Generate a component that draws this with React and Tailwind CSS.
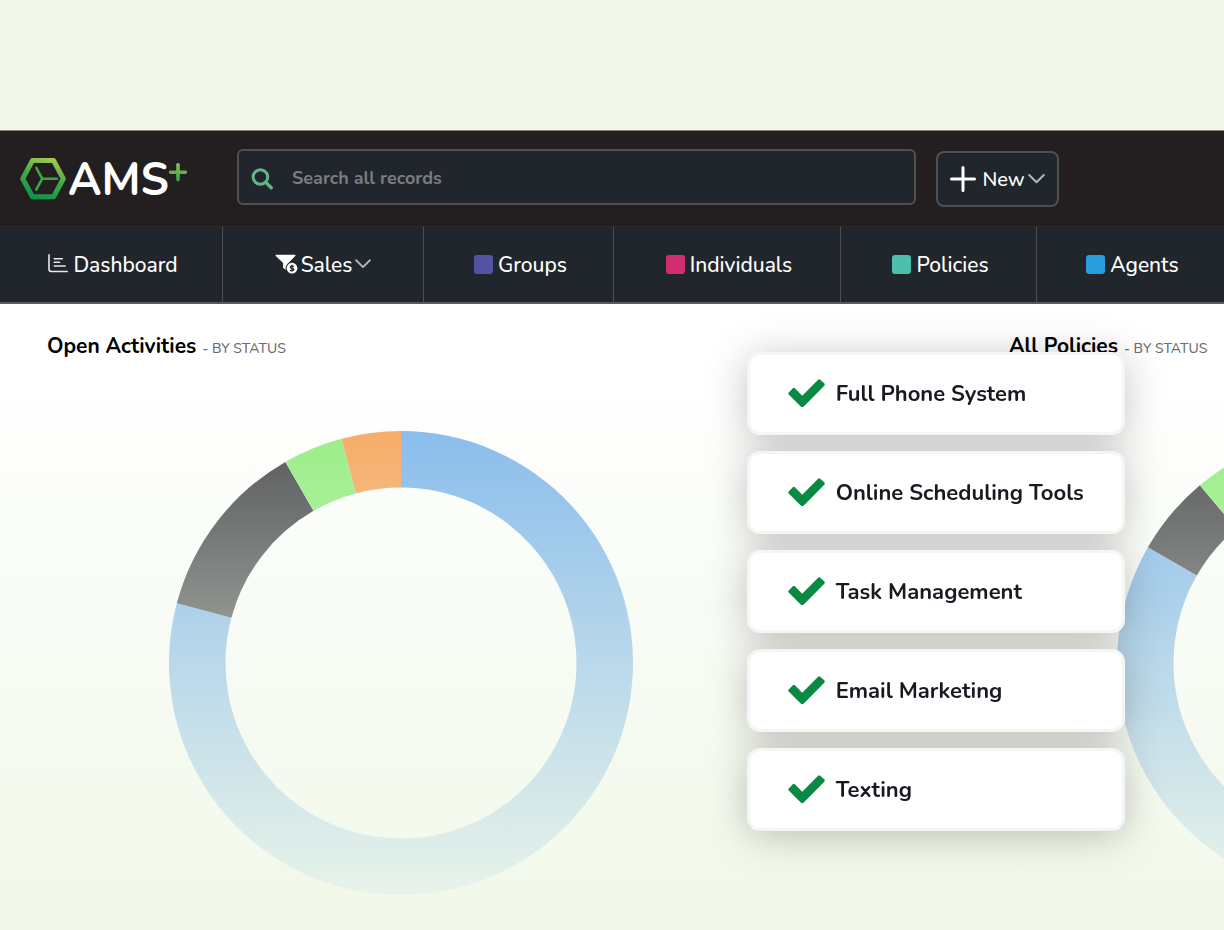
const NAV = [
  { label: 'Dashboard', icon: 'chart' },
  { label: 'Sales', icon: 'funnel', menu: true },
  { label: 'Groups', swatch: 'bg-[#5352a3]' },
  { label: 'Individuals', swatch: 'bg-[#d32d71]' },
  { label: 'Policies', swatch: 'bg-[#4dbfad]' },
  { label: 'Agents', swatch: 'bg-[#289ddb]' },
];

const FEATURES = [
  'Full Phone System',
  'Online Scheduling Tools',
  'Task Management',
  'Email Marketing',
  'Texting',
];

const COLORS = {
  blue: ['#8abdec', '#e8f3e9'],
  dark: ['#57585b', '#e5ebde'],
  green: ['#9bee89', '#e9f7df'],
  orange: ['#f6ad6a', '#f1f1dd'],
};

const ACTIVITIES = [
  { color: 'blue', from: 0, to: 284.9 },
  { color: 'dark', from: 284.9, to: 330.1 },
  { color: 'green', from: 330.1, to: 345.1 },
  { color: 'orange', from: 345.1, to: 360 },
];

const POLICIES = [
  { color: 'blue', from: 0, to: 299.9 },
  { color: 'dark', from: 299.9, to: 320 },
  { color: 'green', from: 320, to: 345 },
  { color: 'orange', from: 345, to: 360 },
];

const OUTER = 232;
const INNER = 175.5;

function arc({ from, to }) {
  const point = (r, deg) => {
    const a = (deg * Math.PI) / 180;
    return `${(OUTER + r * Math.sin(a)).toFixed(2)} ${(OUTER - r * Math.cos(a)).toFixed(2)}`;
  };
  const large = to - from > 180 ? 1 : 0;
  return `M${point(OUTER, from)} A${OUTER} ${OUTER} 0 ${large} 1 ${point(OUTER, to)} L${point(INNER, to)} A${INNER} ${INNER} 0 ${large} 0 ${point(INNER, from)} Z`;
}

function Donut({ id, label, segments }) {
  return (
    <svg width="464" height="464" viewBox="0 0 464 464" role="img" aria-label={label} className="shrink-0">
      <defs>
        {Object.entries(COLORS).map(([name, [top, bottom]]) => (
          <linearGradient key={name} id={`${id}-${name}`} gradientUnits="userSpaceOnUse" x1="0" y1="0" x2="0" y2="464">
            <stop offset="0" stopColor={top} />
            <stop offset="1" stopColor={bottom} />
          </linearGradient>
        ))}
      </defs>
      {segments.map((s) => (
        <path key={s.color} d={arc(s)} fill={`url(#${id}-${s.color})`} />
      ))}
    </svg>
  );
}

function Logo() {
  return (
    <a href="#home" aria-label="AMS+" className="mt-1 flex w-[217px] shrink-0 items-center pl-5">
      <svg width="46" height="42" viewBox="0 0 46 42" fill="none" aria-hidden="true">
        <defs>
          <linearGradient id="hex" x1="30" y1="0" x2="16" y2="42" gradientUnits="userSpaceOnUse">
            <stop offset="0" stopColor="#a5ca4c" />
            <stop offset="0.45" stopColor="#47a94b" />
            <stop offset="1" stopColor="#0c9148" />
          </linearGradient>
        </defs>
        <path d="M12.4 2.6h21.2L43.3 20.7l-9.7 18.1H12.4L2.7 20.7z" stroke="url(#hex)" strokeWidth="5" strokeLinejoin="round" />
        <path d="M37 20.7H22.2M16.3 9.8l5.9 10.9-5.9 10.9" stroke="#3ba549" strokeWidth="2.6" strokeLinecap="round" strokeLinejoin="round" />
      </svg>
      <span className="ml-[2px] pt-1 text-[45px] leading-[42px] font-bold text-white">AMS</span>
      <svg width="18" height="20" viewBox="0 0 18 20" fill="none" aria-hidden="true" className="mb-3">
        <defs>
          <linearGradient id="plus" x1="0" y1="0" x2="0" y2="20" gradientUnits="userSpaceOnUse">
            <stop offset="0" stopColor="#8cc24b" />
            <stop offset="1" stopColor="#2fa04a" />
          </linearGradient>
        </defs>
        <path d="M9 1.8v14.8M1.7 9.2h14.6" stroke="url(#plus)" strokeWidth="3.6" strokeLinecap="round" />
      </svg>
    </a>
  );
}

function Chevron({ size = 17 }) {
  return (
    <svg width={size} height="12" viewBox="0 0 17 12" fill="none" aria-hidden="true">
      <path d="M1.2 2 8.5 9.3 15.8 2" stroke="#a9b8c2" strokeWidth="2" strokeLinecap="round" strokeLinejoin="round" />
    </svg>
  );
}

function ChartIcon() {
  return (
    <svg width="20" height="20" viewBox="0 0 20 20" fill="none" stroke="#e6e8ea" strokeLinecap="round" aria-hidden="true">
      <path d="M1 .8v14.3q0 2.4 2.4 2.4h15.8" strokeWidth="1.6" />
      <path d="M6.2 4.8h8.2M6.2 8.3h5.4M6.2 12h11" strokeWidth="1.5" />
    </svg>
  );
}

function FunnelIcon() {
  return (
    <svg width="23" height="20" viewBox="0 0 23 20" aria-hidden="true">
      <path d="M1 .8h19q1.2 0 .4 1L13.6 9v8.6L8.1 14V9L.6 1.8Q0 .8 1 .8z" fill="#fff" />
      <circle cx="17" cy="14.2" r="6.4" fill="#21262d" />
      <circle cx="17" cy="14.2" r="5.4" fill="#fff" />
      <path d="M18.7 12.8q-.4-1-1.7-1t-1.6 1.1 1.6 1.4 1.7 1.3-1.7 1.2-1.8-1M17 10.8v6.8" stroke="#21262d" strokeWidth="1.3" fill="none" />
    </svg>
  );
}

function Check() {
  return (
    <svg width="37" height="28" viewBox="121 334 1550 1188" fill="#088a43" aria-hidden="true" className="shrink-0">
      <path d="M1671 566q0 28-22 50l-730 742-154 154q-22 22-50 22t-50-22l-154-154-368-368q-22-22-22-44t22-44l172-172q22-22 44-22t44 22l312 313 674-675q22-22 44-22t44 22l172 148q22 22 22 50z" />
    </svg>
  );
}

function Panel({ title, children }) {
  return (
    <section className="min-w-0 overflow-hidden pt-[26px] pl-[47px]">
      <h2 className="flex items-baseline gap-[6px] text-[21px] leading-8 font-bold whitespace-nowrap text-black">
        {title}
        <small className="text-sm font-medium text-[#6c6c6c]">- BY STATUS</small>
      </h2>
      {children}
    </section>
  );
}

export default function App() {
  return (
    <div className="flex min-h-screen flex-col bg-[#f1f8e9] pt-[130px] font-[Nunito,Lato,sans-serif]">
      <header className="border-t border-[#85857f] bg-[#231f20]">
        <div className="flex h-[95px] items-center pb-1">
          <Logo />
          <label className="ml-5 flex h-14 w-[679px] items-center rounded-md border-2 border-[#505050] bg-[#21262d] px-3">
            <svg width="24" height="26" viewBox="0 0 24 26" fill="none" stroke="#65b587" aria-label="Search" role="img">
              <circle cx="9.4" cy="13" r="7.3" strokeWidth="3" />
              <path d="m14.8 18.4 5.4 5.4" strokeWidth="3.4" strokeLinecap="round" />
            </svg>
            <input
              type="search"
              placeholder="Search all records"
              className="ml-[17px] min-w-0 flex-1 bg-transparent pt-[2px] text-lg font-bold text-white outline-none placeholder:text-[#7b7c7e]"
            />
          </label>
          <button
            type="button"
            className="mt-1 ml-5 flex h-14 w-[123px] items-center justify-center rounded-lg border-2 border-[#505050] bg-[#21262d] text-xl font-medium text-white"
          >
            <svg width="26" height="26" viewBox="0 0 26 26" fill="none" stroke="#fff" strokeWidth="3" strokeLinecap="round" aria-hidden="true">
              <path d="M13 1.5v23M1.5 13h23" />
            </svg>
            <span className="mr-[3px] ml-[6px] pt-[2px]">New</span>
            <Chevron />
          </button>
        </div>
        <nav className="grid grid-cols-[223fr_201fr_190fr_227fr_196fr_187fr] border-t border-b-2 border-t-[#302d2f] border-b-[#5a5b5d] bg-[#21262d]">
          {NAV.map((item) => (
            <a
              key={item.label}
              href={`#${item.label.toLowerCase()}`}
              className={`flex h-[75px] items-center justify-center border-r border-[#505050] pb-[2px] text-[21px] font-medium text-white last:border-r-0 ${item.menu ? 'gap-[3px]' : 'gap-[5px] pl-1'}`}
            >
              {item.icon === 'chart' && <ChartIcon />}
              {item.icon === 'funnel' && <FunnelIcon />}
              {item.swatch && <span className={`mt-[2px] size-[19px] rounded-[3px] ${item.swatch}`} />}
              <span className="pt-1">{item.label}</span>
              {item.menu && <Chevron size={16} />}
            </a>
          ))}
        </nav>
      </header>

      <main className="relative grid flex-1 grid-cols-[962fr_262fr] bg-[linear-gradient(to_bottom,#fff_60px,#f1f8e9_100%)]">
        <Panel title="Open Activities">
          <div className="mt-[69px] ml-[122px] flex">
            <Donut id="activities" label="Open activities by status" segments={ACTIVITIES} />
          </div>
        </Panel>
        <Panel title="All Policies">
          <div className="mt-[69px] ml-[108px] flex">
            <Donut id="policies" label="All policies by status" segments={POLICIES} />
          </div>
        </Panel>
        <div className="pointer-events-none absolute inset-0 overflow-hidden">
          <ul className="absolute top-12 left-[61%] flex w-[378px] flex-col gap-4 drop-shadow-[0_5px_20px_rgba(0,0,0,0.23)]">
            {FEATURES.map((name) => (
              <li
                key={name}
                className="flex h-[83px] items-center gap-[11px] rounded-[13px] border-[3px] border-[#f5f5f5] bg-white pb-[2px] pl-[38px] text-[22px] font-bold text-[#171a21]"
              >
                <Check />
                <span className="pt-1">{name}</span>
              </li>
            ))}
          </ul>
        </div>
      </main>
    </div>
  );
}
